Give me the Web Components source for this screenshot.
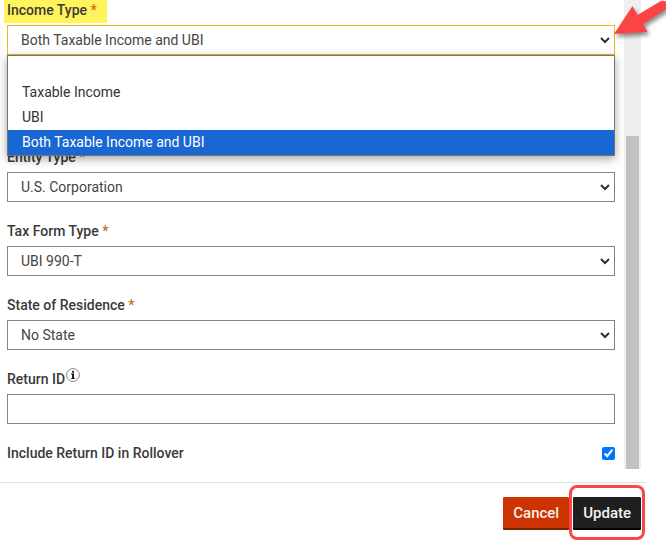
<!DOCTYPE html>
<html lang="en">
<head>
<meta charset="utf-8">
<title>Edit entity</title>
<style>
  body {
    margin: 0;
    background: #fff;
    color: #3a3a3a;
    font: 14px/20px Roboto, "Liberation Sans", sans-serif;
    overflow: hidden;
  }
</style>
</head>
<body>
<entity-dialog>
  <select-field label="Income Type" value="Both Taxable Income and UBI" options="|Taxable Income|UBI|Both Taxable Income and UBI" required open></select-field>
  <select-field label="Entity Type" value="U.S. Corporation" required></select-field>
  <select-field label="Tax Form Type" value="UBI 990-T" required></select-field>
  <select-field label="State of Residence" value="No State" required></select-field>
  <text-field label="Return ID"><info-icon slot="hint"></info-icon></text-field>
  <check-field label="Include Return ID in Rollover" checked></check-field>
  <action-button slot="actions" kind="cancel">Cancel</action-button>
  <action-button slot="actions" kind="update" marked>Update</action-button>
</entity-dialog>
<callout-arrow></callout-arrow>

<script>
const fieldStyle = `
  :host { display: block; }
  label { display: block; width: fit-content; font-weight: 500; }
  .star { color: #cc6a14; }
  .control { position: relative; margin-top: 5px; }
  select, input[type=text] {
    display: block;
    box-sizing: border-box;
    width: 100%;
    height: 30px;
    margin: 0;
    padding: 0 13px;
    border: 1px solid #858585;
    border-radius: 0;
    outline: 0;
    appearance: none;
    background: #fff;
    color: #454545;
    font: inherit;
  }
`

class EntityDialog extends HTMLElement {
  constructor() {
    super();
    this.attachShadow({ mode: 'open' });
    this.shadowRoot.innerHTML = `
      <style>
        :host { display: block; margin-right: 19px; }
        .body { display: flex; margin-right: 6px; }
        form {
          flex: 1;
          display: flex;
          flex-direction: column;
          gap: 19px;
          padding: 0 9px 6px 7px;
        }
        .track {
          display: flex;
          align-items: flex-end;
          justify-content: center;
          width: 17px;
          background: #efefef;
        }
        .thumb { width: 13px; height: 71%; background: #c1c1c1; }
        footer {
          display: flex;
          justify-content: flex-end;
          gap: 4px;
          margin-top: 13px;
          padding: 14px 6px 10px;
          border-top: 1px solid #e2e2e2;
        }
      </style>
      <div class="body">
        <form><slot></slot></form>
        <div class="track"><div class="thumb"></div></div>
      </div>
      <footer><slot name="actions"></slot></footer>
    `;
  }
}

class SelectField extends HTMLElement {
  constructor() {
    super();
    this.attachShadow({ mode: 'open' });
  }
  connectedCallback() {
    const value = this.getAttribute('value')
    const star = this.hasAttribute('required') ? ' <span class="star">*</span>' : ''
    this.shadowRoot.innerHTML = `
      <style>
        ${fieldStyle}
        .chevron { position: absolute; right: 5px; top: 11px; pointer-events: none; }
        /* the open list covers the row below this field */
        :host([open]) { margin-bottom: 73px; }
        :host([open]) label {
          margin: 0 0 -3px -3px;
          padding: 0 10px 3px 3px;
          background: #fff45c;
        }
        :host([open]) select { border-color: #f2b51d; }
        .list {
          position: absolute;
          z-index: 1;
          top: 100%;
          left: 0;
          right: 0;
          border: 1px solid #747474;
          background: #fff;
          box-shadow: 0 3px 9px rgba(0, 0, 0, .35);
        }
        .option { height: 25px; padding: 0 14px; line-height: 25px; color: #333; }
        .option:empty { height: 24px; }
        .option[aria-selected=true] { background: #1967d2; color: #fff; }
      </style>
      <label for="control">${this.getAttribute('label')}${star}</label>
      <div class="control">
        <select id="control"><option>${value}</option></select>
        <svg class="chevron" width="10" height="8" viewBox="0 0 10 8" fill="none" stroke="#303030" stroke-width="2">
          <path d="M1 2 L5 6 L9 2"/>
        </svg>
        ${this.hasAttribute('open') ? this.renderList(value) : ''}
      </div>
    `;
  }
  renderList(value) {
    const rows = this.getAttribute('options').split('|').map(item =>
      `<div class="option" role="option" aria-selected="${item === value}">${item}</div>`
    )
    return `<div class="list" role="listbox" aria-label="${this.getAttribute('label')}">${rows.join('')}</div>`
  }
}

class TextField extends HTMLElement {
  constructor() {
    super();
    this.attachShadow({ mode: 'open' });
  }
  connectedCallback() {
    this.shadowRoot.innerHTML = `
      <style>
        ${fieldStyle}
        .head { display: flex; gap: 1px; }
      </style>
      <div class="head">
        <label for="control">${this.getAttribute('label')}</label>
        <slot name="hint"></slot>
      </div>
      <div class="control"><input type="text" id="control"></div>
    `;
  }
}

class CheckField extends HTMLElement {
  constructor() {
    super();
    this.attachShadow({ mode: 'open' });
  }
  connectedCallback() {
    this.shadowRoot.innerHTML = `
      <style>
        ${fieldStyle}
        :host { display: flex; justify-content: space-between; align-items: center; }
        input { width: 13px; height: 13px; margin: 0; accent-color: #0075ff; }
      </style>
      <label for="control">${this.getAttribute('label')}</label>
      <input type="checkbox" id="control" ${this.hasAttribute('checked') ? 'checked' : ''}>
    `;
  }
}

class InfoIcon extends HTMLElement {
  constructor() {
    super();
    this.attachShadow({ mode: 'open' });
    this.shadowRoot.innerHTML = `
      <style>
        :host { display: block; height: 14px; margin-top: -1px; }
        svg { display: block; }
      </style>
      <svg width="14" height="14" viewBox="0 0 14 14">
        <circle cx="7" cy="7" r="6.4" fill="#fff" stroke="#666" stroke-width=".8"/>
        <circle cx="7" cy="3.8" r="1.1" fill="#111"/>
        <path d="M5 5.6 H8 V10.2 H9.2 V11 H5 V10.2 H6.1 V6.4 H5 Z" fill="#111"/>
      </svg>
    `;
  }
}

class ActionButton extends HTMLElement {
  constructor() {
    super();
    this.attachShadow({ mode: 'open' });
    this.shadowRoot.innerHTML = `
      <style>
        :host { display: block; position: relative; }
        button {
          display: block;
          height: 33px;
          padding: 0 10px;
          border: 0;
          border-bottom: 2px solid #7d1e00;
          border-radius: 1px;
          background: #cc3300;
          color: #f6f1ee;
          font: 500 15px/30px Roboto, "Liberation Sans", sans-serif;
        }
        :host([kind=update]) button { border-color: #000; background: #1f1f1f; }
        :host([marked])::after {
          content: "";
          position: absolute;
          inset: -12px -4px -10px;
          border: 3px solid #f9474b;
          border-radius: 8px;
        }
      </style>
      <button type="button"><slot></slot></button>
    `;
  }
}

class CalloutArrow extends HTMLElement {
  constructor() {
    super();
    this.attachShadow({ mode: 'open' });
    this.shadowRoot.innerHTML = `
      <style>
        :host { display: block; position: absolute; z-index: 2; top: 0; right: 0; }
        svg { display: block; filter: drop-shadow(2px 3px 2px rgba(0, 0, 0, .45)); }
      </style>
      <svg width="56" height="44" viewBox="0 0 56 44">
        <path d="M4 34 L22.5 6 L27.5 15 L50 1.5 Q54 0 57 2 V8.5 L33 24 L37.5 32 Z" fill="#fc4447"/>
      </svg>
    `;
  }
}

customElements.define('info-icon', InfoIcon);
customElements.define('select-field', SelectField);
customElements.define('text-field', TextField);
customElements.define('check-field', CheckField);
customElements.define('action-button', ActionButton);
customElements.define('callout-arrow', CalloutArrow);
customElements.define('entity-dialog', EntityDialog);
</script>
</body>
</html>
